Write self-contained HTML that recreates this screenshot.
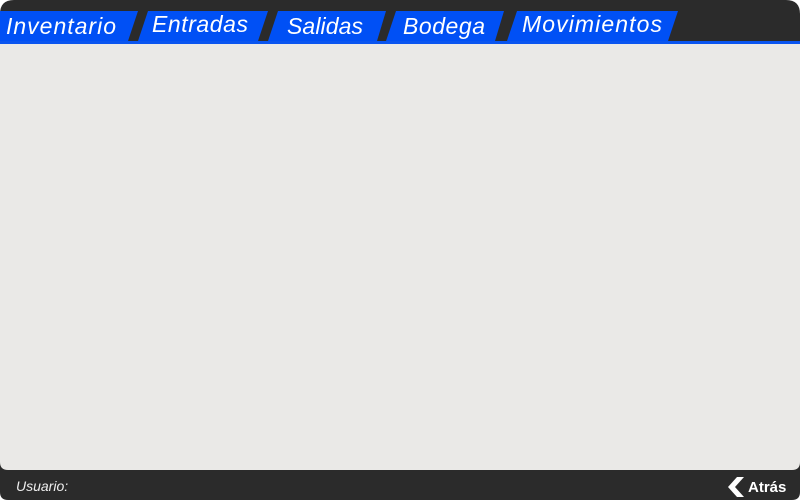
<!DOCTYPE html>
<html><head><style>
html,body{margin:0;padding:0;width:800px;height:500px;overflow:hidden;background:#fff}
</style></head><body>
<svg width="800" height="500" xmlns="http://www.w3.org/2000/svg" style="display:block">
<path d="M14,0 H786 Q800,0 800,14 V492 Q800,500 792,500 H8 Q0,500 0,492 V14 Q0,0 14,0 Z" fill="#2b2b2b"/>
<rect x="0" y="41" width="800" height="3" fill="#0a55f0"/>
<path d="M0,44 H800 V462 Q800,470 792,470 H8 Q0,470 0,462 Z" fill="#eae9e7"/>
<g fill="#0050f5">
<polygon points="0,11 138,11 128,41 0,41"/>
<polygon points="148,11 268,11 258,41 138,41"/>
<polygon points="278,11 386,11 377,41 268,41"/>
<polygon points="396,11 504,11 495,41 386,41"/>
<polygon points="517,11 678,11 668,41 507,41"/>
</g>
<g fill="#fff" font-family="Liberation Sans, sans-serif" font-style="italic" font-size="23">
<text x="6" y="34" textLength="110">Inventario</text>
<text x="152" y="32" textLength="96">Entradas</text>
<text x="287" y="34" textLength="76">Salidas</text>
<text x="403" y="34" textLength="82">Bodega</text>
<text x="522" y="32" textLength="140">Movimientos</text>
</g>
<text x="16" y="491" fill="#eee" font-family="Liberation Sans, sans-serif" font-style="italic" font-size="14">Usuario:</text>
<polygon points="737,477 744,477 735,487 744,497 737,497 728,487" fill="#fff"/>
<text x="748" y="492" fill="#fff" font-family="Liberation Sans, sans-serif" font-weight="bold" font-size="15">Atrás</text>
</svg>
</body></html>
